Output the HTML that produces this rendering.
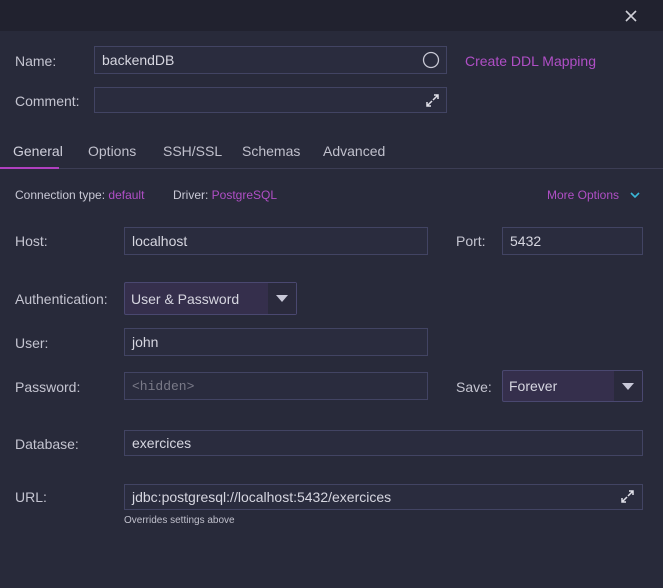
<!DOCTYPE html>
<html><head><style>
body{margin:0;width:663px;height:588px;background:#282a3a;font-family:"Liberation Sans",sans-serif;color:#c9c9d6;position:relative;overflow:hidden;font-size:14px}
.a{position:absolute}
.top{left:0;top:0;width:663px;height:31px;background:#21222f}
.lbl{font-size:14px;color:#c4c4d0}
.in{box-sizing:border-box;border:1px solid #424463;background:#2a2c3e;padding-left:7px;color:#d6d6e0;font-size:14px;display:flex;align-items:center}
.sel{box-sizing:border-box;border:1px solid #4a4870;background:#352f4c;color:#d6d6e0;font-size:14px;display:flex;align-items:center;padding-left:6px;border-radius:2px}
.arr{position:absolute;right:0;top:0;bottom:0;width:28px;background:#2a2a3c;display:flex;align-items:center;justify-content:center}
.arr:after{content:"";border-left:6px solid transparent;border-right:6px solid transparent;border-top:7px solid #c8c8d8}
.m{color:#b04fc6}
.small{font-size:12px}
</style></head><body>
<div class="a top"></div>
<svg class="a" style="left:624px;top:9px" width="14" height="14"><path d="M2 2L12 12M12 2L2 12" stroke="#d0d0d8" stroke-width="1.6"/></svg>
<div class="a lbl" style="left:15px;top:53px">Name:</div>
<div class="a in" style="left:94px;top:46px;width:353px;height:28px">backendDB</div>
<svg class="a" style="left:422px;top:51px" width="18" height="18"><circle cx="9" cy="9" r="7.5" fill="none" stroke="#c8c8d4" stroke-width="1.3"/></svg>
<div class="a m" style="left:465px;top:53px">Create DDL Mapping</div>
<div class="a lbl" style="left:15px;top:93px">Comment:</div>
<div class="a in" style="left:94px;top:87px;width:353px;height:26px"></div>
<svg class="a" style="left:425px;top:93px" width="15" height="15"><path d="M8 7L13 2M9 2H13V6M7 8L2 13M2 9V13H6" stroke="#e0e0e8" stroke-width="1.5" fill="none"/></svg>
<div class="a" style="left:13px;top:143px;color:#d0d0dc">General</div>
<div class="a" style="left:88px;top:143px;color:#c0c0cc">Options</div>
<div class="a" style="left:163px;top:143px;color:#c0c0cc">SSH/SSL</div>
<div class="a" style="left:242px;top:143px;color:#c0c0cc">Schemas</div>
<div class="a" style="left:323px;top:143px;color:#c0c0cc">Advanced</div>
<div class="a" style="left:0;top:168px;width:663px;height:1px;background:#3c3d54"></div>
<div class="a" style="left:0;top:167px;width:59px;height:2px;background:#b040c0"></div>
<div class="a small" style="left:15px;top:188px">Connection type: <span class="m">default</span></div>
<div class="a small" style="left:173px;top:188px">Driver: <span class="m">PostgreSQL</span></div>
<div class="a small m" style="left:547px;top:188px">More Options</div>
<svg class="a" style="left:630px;top:191px" width="10" height="8"><path d="M1 2L5 6L9 2" stroke="#3ab8d8" stroke-width="1.6" fill="none"/></svg>
<div class="a lbl" style="left:15px;top:233px">Host:</div>
<div class="a in" style="left:124px;top:227px;width:304px;height:28px">localhost</div>
<div class="a lbl" style="left:456px;top:233px">Port:</div>
<div class="a in" style="left:502px;top:227px;width:141px;height:28px">5432</div>
<div class="a lbl" style="left:15px;top:291px">Authentication:</div>
<div class="a sel" style="left:124px;top:282px;width:173px;height:33px">User &amp; Password<div class="arr"></div></div>
<div class="a lbl" style="left:15px;top:335px">User:</div>
<div class="a in" style="left:124px;top:328px;width:304px;height:28px">john</div>
<div class="a lbl" style="left:15px;top:379px">Password:</div>
<div class="a in" style="left:124px;top:372px;width:304px;height:28px;font-family:'Liberation Mono',monospace;font-size:13px;color:#7a7a88">&lt;hidden&gt;</div>
<div class="a lbl" style="left:456px;top:379px">Save:</div>
<div class="a sel" style="left:502px;top:370px;width:141px;height:32px">Forever<div class="arr"></div></div>
<div class="a lbl" style="left:15px;top:436px">Database:</div>
<div class="a in" style="left:124px;top:430px;width:519px;height:26px">exercices</div>
<div class="a lbl" style="left:15px;top:489px">URL:</div>
<div class="a in" style="left:124px;top:484px;width:519px;height:26px">jdbc:postgresql://localhost:5432/exercices</div>
<svg class="a" style="left:620px;top:489px" width="15" height="15"><path d="M8 7L13 2M9 2H13V6M7 8L2 13M2 9V13H6" stroke="#e0e0e8" stroke-width="1.5" fill="none"/></svg>
<div class="a" style="left:124px;top:515px;font-size:10px;color:#c0c0cc">Overrides settings above</div>
</body></html>
